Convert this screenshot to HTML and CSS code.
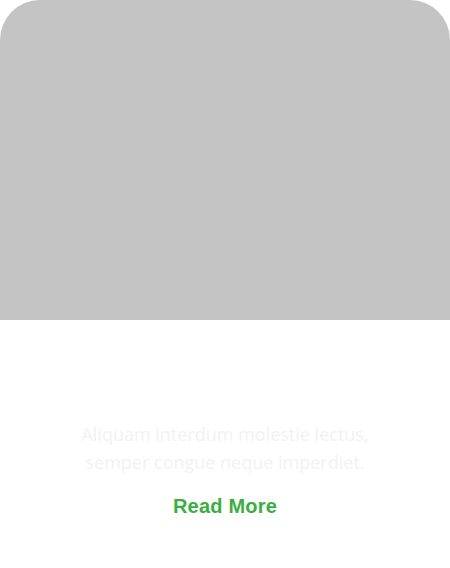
FILE: index.html
```html
<!DOCTYPE html>
<html>
<head>
<meta charset="utf-8">
<link rel="stylesheet" href="styles.css">
</head>
<body>
<div class="card">
  <div class="media"></div>
  <div class="content">
    <p class="desc">Aliquam interdum molestie lectus,<br>semper congue neque imperdiet.</p>
    <a class="more" href="#">Read More</a>
  </div>
</div>
</body>
</html>
```
FILE: styles.css
```css
html, body {
  margin: 0;
  padding: 0;
  background: #ffffff;
}
.card {
  width: 450px;
  display: flex;
  flex-direction: column;
}
.media {
  height: 320px;
  background: #c4c4c4;
  border-radius: 40px 40px 0 0;
}
.content {
  display: flex;
  flex-direction: column;
  align-items: center;
  padding-top: 100px;
}
.desc {
  margin: 0;
  font-family: "Open Sans", sans-serif;
  font-size: 18px;
  line-height: 28px;
  color: #f2f2f2;
  text-align: center;
}
.more {
  margin-top: 16px;
  font-family: "Liberation Sans", Arial, sans-serif;
  font-weight: bold;
  font-size: 20px;
  line-height: 28px;
  color: #3aaf3f;
  text-decoration: none;
  letter-spacing: 0.2px;
}
```
